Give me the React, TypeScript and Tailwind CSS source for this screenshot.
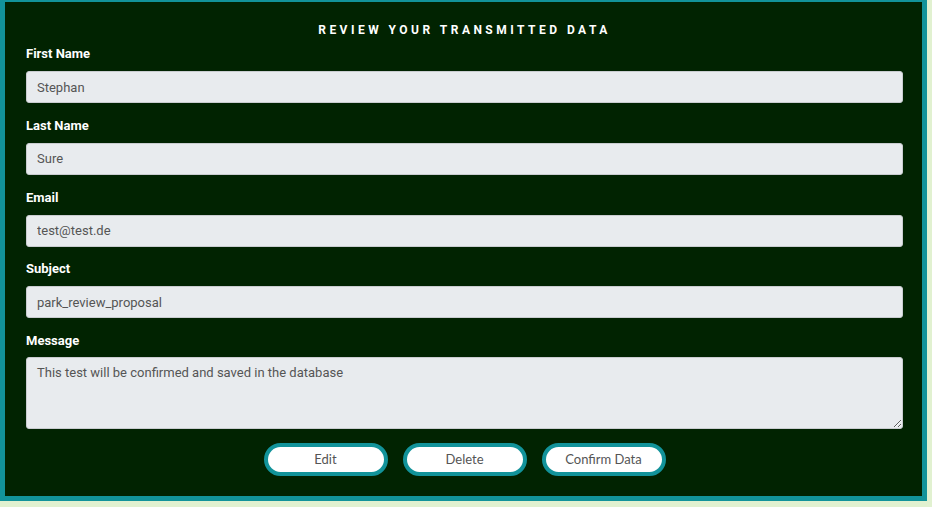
import React from "react";

const fields = [
  { label: "First Name", value: "Stephan" },
  { label: "Last Name", value: "Sure" },
  { label: "Email", value: "test@test.de" },
  { label: "Subject", value: "park_review_proposal" },
];

export default function App() {
  return (
    <div className="w-[932px] h-[507px] bg-[#e1f1d0] overflow-hidden" style={{ fontFamily: "Roboto, 'Liberation Sans', sans-serif" }}>
      <div className="w-[927px] h-[501px] bg-[#012301] border-t-2 border-x-[5px] border-b-[5px] border-[#12939a] pl-[21px] pr-[19px] pt-[20px] flex flex-col">
        <h1 className="text-center text-white font-bold text-[12px] leading-[16px] tracking-[0.29em]">
          REVIEW YOUR TRANSMITTED DATA
        </h1>
        <div className="mt-[8px] flex flex-col">
          {fields.map((f) => (
            <div key={f.label} className="flex flex-col mb-[14.75px]">
              <label className="text-white font-bold text-[13px] leading-[16px]">{f.label}</label>
              <input
                readOnly
                value={f.value}
                className="mt-[9px] h-[32px] w-full bg-[#e8ebee] border border-[#c9ccd0] rounded-[3px] px-[10px] text-[13px] text-[#555]"
              />
            </div>
          ))}
          <div className="flex flex-col">
            <label className="text-white font-bold text-[13px] leading-[16px]">Message</label>
            <textarea
              readOnly
              defaultValue="This test will be confirmed and saved in the database"
              className="mt-[8px] h-[72px] w-full bg-[#e8ebee] border border-[#c9ccd0] rounded-[3px] px-[10px] py-[6px] text-[13px] text-[#555] leading-[18px]"
            />
          </div>
        </div>
        <div className="mt-[14px] flex justify-center gap-[15px]" style={{ fontFamily: "Lato, 'Open Sans', sans-serif" }}>
          {["Edit", "Delete", "Confirm Data"].map((b) => (
            <button
              key={b}
              className="w-[124px] h-[33px] rounded-full border-4 border-[#12939a] bg-white text-[13px] text-[#555]"
            >
              {b}
            </button>
          ))}
        </div>
      </div>
    </div>
  );
}
